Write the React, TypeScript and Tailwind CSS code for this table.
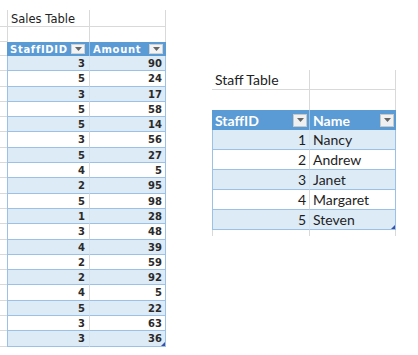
import React from "react";

const sales: [number, number][] = [
  [3, 90], [5, 24], [3, 17], [5, 58], [5, 14], [3, 56], [5, 27], [4, 5], [2, 95], [5, 98],
  [1, 28], [3, 48], [4, 39], [2, 59], [2, 92], [4, 5], [5, 22], [3, 63], [3, 36],
];

const staff = ["Nancy", "Andrew", "Janet", "Margaret", "Steven"];

function Drop({ small }: { small?: boolean }) {
  return (
    <span
      className={
        small
          ? "flex h-[10px] w-[14px] items-center justify-center border border-[#d0d0d0] bg-[#f2f3f5]"
          : "flex h-[13px] w-[14px] items-center justify-center border border-[#c8c8c8] bg-[#eef0f2]"
      }
    >
      <svg width="7" height="4" viewBox="0 0 7 4">
        <path d="M0 0H7L3.5 4Z" fill="#666" />
      </svg>
    </span>
  );
}

function SalesTable() {
  return (
    <div className="flex w-[166px] flex-col pt-[10px] font-['DejaVu_Sans',sans-serif]">
      <div className="flex h-[17px]">
        <div className="w-[7px] border-b border-[#d9d9d9]" />
        <div className="w-[82px] border-b border-l border-[#d9d9d9] pl-[3px] text-[11.5px] leading-[18px] text-[#222]">
          Sales Table
        </div>
        <div className="w-[77px] border-b border-l border-r border-[#d9d9d9]" />
      </div>
      <div className="flex h-[15px]">
        <div className="w-[7px] border-b border-[#d9d9d9]" />
        <div className="w-[82px] border-l border-[#d9d9d9]" />
        <div className="w-[77px] border-l border-r border-[#d9d9d9]" />
      </div>
      <div className="flex h-[14px]">
        <div className="w-[7px] border-b border-[#d9d9d9]" />
        <div className="flex w-[82px] items-center justify-between bg-[#5b9bd5] pl-[3px] pr-[4px] text-[10px] font-bold tracking-[0.7px] text-white">
          <span>StaffIDID</span>
          <Drop small />
        </div>
        <div className="flex w-[77px] items-center justify-between border-l border-[#9bc2e6] bg-[#5b9bd5] pl-[3px] pr-[3px] text-[10px] font-bold tracking-[0.7px] text-white">
          <span>Amount</span>
          <Drop small />
        </div>
      </div>
      {sales.map(([id, amt], i) => (
        <div key={i} className="flex h-[15.3px]">
          <div className="w-[7px] border-b border-[#d9d9d9]" />
          <div
            className={
              (i % 2 === 0 ? "bg-[#ddebf7] " : "bg-white ") +
              "w-[82px] border-b border-l border-[#9bc2e6] pr-[4px] text-right text-[10px] font-bold leading-[15px] text-[#2a2a2a]"
            }
          >
            {id}
          </div>
          <div
            className={
              (i % 2 === 0 ? "bg-[#ddebf7] border-l-[#d6e4f0] " : "bg-white border-l-[#d9d9d9] ") +
              "relative w-[77px] border-b border-l border-r border-b-[#9bc2e6] border-r-[#9bc2e6] pr-[3px] text-right text-[10px] font-bold leading-[15px] text-[#2a2a2a]"
            }
          >
            {amt}
            {i === sales.length - 1 && (
              <span className="absolute bottom-0 right-0 h-0 w-0 border-b-[4px] border-l-[4px] border-b-[#3a4fa8] border-l-transparent" />
            )}
          </div>
        </div>
      ))}
    </div>
  );
}

function StaffTable() {
  return (
    <div className="ml-[46px] mt-[70px] flex w-[184px] flex-col font-['Lato',sans-serif] text-[14px]">
      <div className="flex h-[20px]">
        <div className="w-[97px] border-b border-[#d9d9d9] pl-[3px] leading-[20px] text-[#222]">Staff Table</div>
        <div className="w-[87px] border-b border-l border-r border-[#d9d9d9]" />
      </div>
      <div className="flex h-[20px]">
        <div className="w-[97px]" />
        <div className="w-[87px] border-l border-r border-[#d9d9d9]" />
      </div>
      <div className="flex h-[20px]">
        <div className="flex w-[97px] items-center justify-between bg-[#5b9bd5] pl-[3px] pr-[2px] font-bold text-white">
          <span>StaffID</span>
          <Drop />
        </div>
        <div className="flex w-[87px] items-center justify-between border-l border-[#9bc2e6] bg-[#5b9bd5] pl-[3px] pr-[2px] font-bold text-white">
          <span>Name</span>
          <Drop />
        </div>
      </div>
      {staff.map((name, i) => (
        <div key={name} className="flex h-[20px]">
          <div
            className={
              (i % 2 === 0 ? "bg-[#ddebf7] " : "bg-white ") +
              "w-[97px] border-b border-l border-[#9bc2e6] pr-[3px] text-right leading-[19px] text-[#1e1e1e]"
            }
          >
            {i + 1}
          </div>
          <div
            className={
              (i % 2 === 0 ? "bg-[#ddebf7] border-l-[#d6e4f0] " : "bg-white border-l-[#d9d9d9] ") +
              "relative w-[87px] border-b border-l border-r border-b-[#9bc2e6] border-r-[#9bc2e6] pl-[3px] leading-[19px] text-[#1e1e1e]"
            }
          >
            {name}
            {i === staff.length - 1 && (
              <span className="absolute bottom-0 right-0 h-0 w-0 border-b-[4px] border-l-[4px] border-b-[#3a4fa8] border-l-transparent" />
            )}
          </div>
        </div>
      ))}
      <div className="flex h-[6px]">
        <div className="w-[97px] border-l border-[#d9d9d9]" />
        <div className="w-[87px] border-l border-r border-[#d9d9d9]" />
      </div>
    </div>
  );
}

export default function App() {
  return (
    <div className="flex h-[355px] w-[418px] items-start overflow-hidden bg-white">
      <SalesTable />
      <StaffTable />
    </div>
  );
}
